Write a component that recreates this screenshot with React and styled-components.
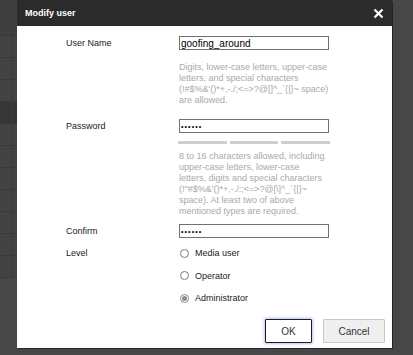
import React from "react";
import styled, { createGlobalStyle } from "styled-components";

const Global = createGlobalStyle`
  html, body { margin: 0; padding: 0; }
  body {
    width: 413px; height: 355px; overflow: hidden;
    background: #474747;
    font-family: "Liberation Sans", Arial, sans-serif;
  }
`;

const Page = styled.div`
  position: relative;
  width: 413px;
  height: 355px;
  background: #474747;
  overflow: hidden;
`;

const BgTable = styled.div`
  width: 300px;
  display: flex;
  flex-direction: column;
`;

const BgHeader = styled.div`
  height: 36px;
  background: #3f3f3f;
  border-bottom: 1px solid #393939;
  box-sizing: border-box;
`;

const BgRow = styled.div`
  height: 22px;
  box-sizing: border-box;
  border-bottom: 1px solid #3a3a3a;
  background: ${(p) => (p.$dark ? "#363636" : "#434343")};
  display: grid;
  grid-template-columns: 13px 1fr;
  & > div:first-child { border-right: 1px solid #3b3b3b; }
`;

const Dialog = styled.div`
  position: absolute;
  left: 17px;
  top: 0;
  width: 375px;
  height: 348px;
  background: #fff;
  box-shadow: 1px 1px 0 #262626;
  display: flex;
  flex-direction: column;
`;

const TitleBar = styled.div`
  height: 26px;
  background: #2b2b2b;
  display: flex;
  align-items: center;
  justify-content: space-between;
  padding: 0 8px;
  color: #fff;
  font-weight: bold;
  font-size: 9px;
`;

const Close = styled.button`
  border: 0;
  background: none;
  padding: 0;
  width: 11px;
  height: 11px;
  display: flex;
`;

const Body = styled.div`
  flex: 1;
  display: flex;
  flex-direction: column;
  padding: 10px 7px 5px 49px;
`;

const Row = styled.div`
  display: grid;
  grid-template-columns: 113px 152px;
  align-items: start;
  margin-top: ${(p) => p.$mt || 0}px;
`;

const Label = styled.div`
  font-size: 9px;
  line-height: 14px;
  color: #1a1a1a;
`;

const Field = styled.div`
  display: flex;
  flex-direction: column;
`;

const Input = styled.input`
  box-sizing: border-box;
  width: 150px;
  height: 14px;
  border: 1px solid #707070;
  padding: 0 1px;
  margin: 0;
  font-family: "Liberation Sans", Arial, sans-serif;
  font-size: ${(p) => (p.$secret ? "7px" : "10px")};
  letter-spacing: ${(p) => (p.$secret ? "1.1px" : "0")};
  color: #000;
  outline: none;
  background: #fff;
`;

const Hint = styled.div`
  margin-top: ${(p) => p.$mt}px;
  font-size: 9px;
  line-height: 11px;
  color: #a9a9a9;
  white-space: nowrap;
`;

const HintLine = styled.div``;

const Strength = styled.div`
  display: flex;
  gap: 3px;
  width: 152px;
  margin: 8px 0 0 -1px;
`;

const Seg = styled.div`
  flex: 1;
  height: 3px;
  background: #cfcfcf;
`;

const Radios = styled.div`
  display: flex;
  flex-direction: column;
  gap: 8.5px;
`;

const RadioItem = styled.label`
  display: flex;
  align-items: center;
  height: 14px;
  font-size: 9px;
  color: #1a1a1a;
  gap: 6px;
`;

const Circle = styled.span`
  box-sizing: border-box;
  width: 9px;
  height: 9px;
  margin-left: 1px;
  border-radius: 50%;
  border: 1px solid ${(p) => (p.$on ? "#8a8a8a" : "#7a7a7a")};
  background: #fff;
  display: flex;
  align-items: center;
  justify-content: center;
  &::after {
    content: "";
    width: 5px;
    height: 5px;
    border-radius: 50%;
    background: ${(p) => (p.$on ? "#8c8c8c" : "transparent")};
  }
`;

const Footer = styled.div`
  margin-top: auto;
  display: flex;
  justify-content: flex-end;
  gap: 11px;
`;

const Button = styled.button`
  box-sizing: border-box;
  height: 24px;
  width: ${(p) => p.$w}px;
  font-family: "Liberation Sans", Arial, sans-serif;
  font-size: 10px;
  color: #333;
  border-radius: 1px;
  padding: 0;
  border: 1px solid ${(p) => (p.$primary ? "#1e1e1e" : "#c6c6c6")};
  background: ${(p) => (p.$primary ? "#fff" : "#efefef")};
  box-shadow: ${(p) => (p.$primary ? "0 0 3px 1px rgba(120,150,240,0.55)" : "none")};
`;

const userHint = [
  "Digits, lower-case letters, upper-case",
  "letters, and special characters",
  "(!#$%&'()*+,-./;<=>?@[]^_`{|}~ space)",
  "are allowed.",
];

const passHint = [
  "8 to 16 characters allowed, including",
  "upper-case letters, lower-case",
  "letters, digits and special characters",
  "(!\"#$%&'()*+,-./:;<=>?@[\\]^_`{|}~",
  "space). At least two of above",
  "mentioned types are required.",
];

export default function App() {
  return (
    <Page>
      <Global />
      <BgTable>
        <BgHeader />
        {[0, 1, 2, 3, 4, 5, 6, 7, 8, 9, 10].map((i) => (
          <BgRow key={i} $dark={i === 3}>
            <div />
            <div />
          </BgRow>
        ))}
      </BgTable>
      <Dialog>
        <TitleBar>
          <span>Modify user</span>
          <Close aria-label="close">
            <svg width="11" height="11" viewBox="0 0 11 11">
              <path d="M1.5 1.5 L9.5 9.5 M9.5 1.5 L1.5 9.5" stroke="#fff" strokeWidth="2.2" strokeLinecap="butt" />
            </svg>
          </Close>
        </TitleBar>
        <Body>
          <Row>
            <Label>User Name</Label>
            <Field>
              <Input readOnly value="goofing_around" />
              <Hint $mt={12}>
                {userHint.map((l) => (
                  <HintLine key={l}>{l}</HintLine>
                ))}
              </Hint>
            </Field>
          </Row>
          <Row $mt={13}>
            <Label>Password</Label>
            <Field>
              <Input $secret readOnly value="••••••" />
              <Strength>
                <Seg />
                <Seg />
                <Seg />
              </Strength>
              <Hint $mt={7}>
                {passHint.map((l) => (
                  <HintLine key={l}>{l}</HintLine>
                ))}
              </Hint>
            </Field>
          </Row>
          <Row $mt={7}>
            <Label>Confirm</Label>
            <Input $secret readOnly value="••••••" />
          </Row>
          <Row $mt={8}>
            <Label>Level</Label>
            <Radios>
              <RadioItem>
                <Circle />
                Media user
              </RadioItem>
              <RadioItem>
                <Circle />
                Operator
              </RadioItem>
              <RadioItem>
                <Circle $on />
                Administrator
              </RadioItem>
            </Radios>
          </Row>
          <Footer>
            <Button $primary $w={47}>OK</Button>
            <Button $w={62}>Cancel</Button>
          </Footer>
        </Body>
      </Dialog>
    </Page>
  );
}
